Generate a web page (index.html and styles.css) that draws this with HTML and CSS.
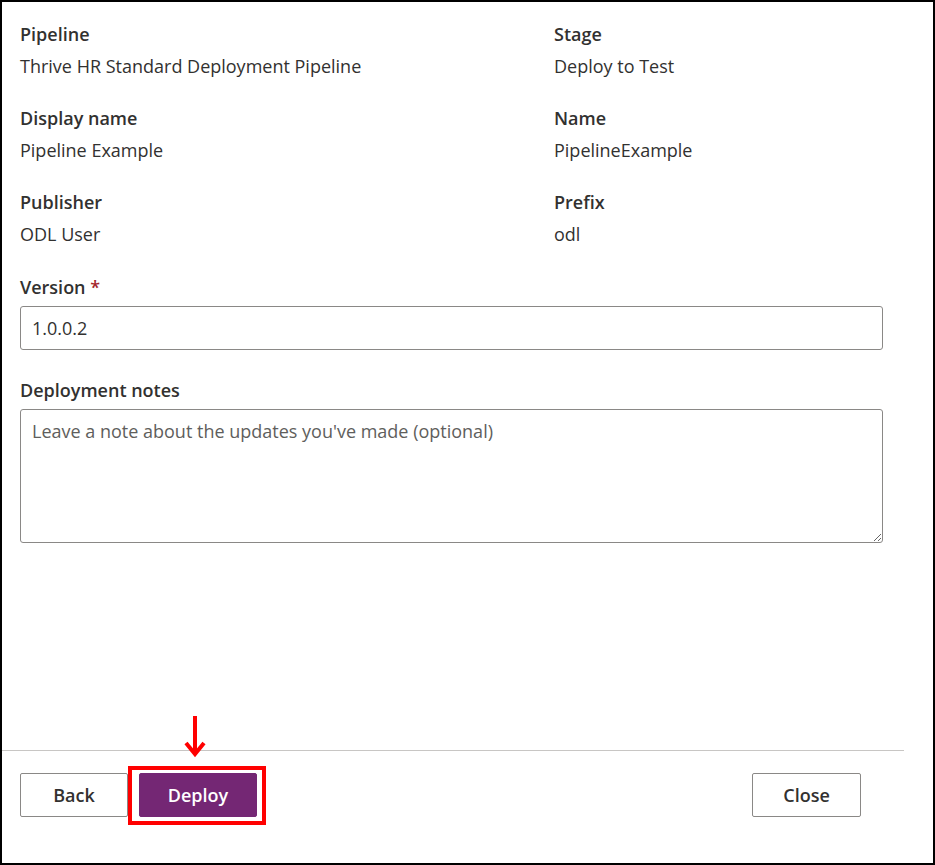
FILE: index.html
```html
<!DOCTYPE html>
<html lang="en">
<head>
<meta charset="utf-8">
<title>Deploy</title>
<link rel="stylesheet" href="styles.css">
</head>
<body>
<div class="frame">
  <main class="content">
    <div class="grid">
      <div class="field">
        <div class="label">Pipeline</div>
        <div class="value">Thrive HR Standard Deployment Pipeline</div>
      </div>
      <div class="field">
        <div class="label">Stage</div>
        <div class="value">Deploy to Test</div>
      </div>
      <div class="field">
        <div class="label">Display name</div>
        <div class="value">Pipeline Example</div>
      </div>
      <div class="field">
        <div class="label">Name</div>
        <div class="value">PipelineExample</div>
      </div>
      <div class="field">
        <div class="label">Publisher</div>
        <div class="value">ODL User</div>
      </div>
      <div class="field">
        <div class="label">Prefix</div>
        <div class="value">odl</div>
      </div>
    </div>
    <div class="form-field">
      <label class="label" for="ver">Version <span class="req">*</span></label>
      <input id="ver" class="input" type="text" value="1.0.0.2">
    </div>
    <div class="form-field">
      <label class="label" for="notes">Deployment notes</label>
      <textarea id="notes" class="textarea" placeholder="Leave a note about the updates you've made (optional)"></textarea>
    </div>
  </main>
  <footer class="footer">
    <div class="left-actions">
      <button class="btn">Back</button>
      <div class="highlight-wrap">
        <button class="btn primary">Deploy</button>
        <span class="highlight"></span>
        <svg class="arrow" width="24" height="42" viewBox="0 0 24 42">
          <line x1="12" y1="0" x2="12" y2="38" stroke="#ff0000" stroke-width="4"/>
          <polyline points="3,27 12,38 21,27" fill="none" stroke="#ff0000" stroke-width="4"/>
        </svg>
      </div>
    </div>
    <button class="btn close">Close</button>
  </footer>
</div>
</body>
</html>
```

FILE: styles.css
```css
* { box-sizing: border-box; }
html, body { margin: 0; padding: 0; background: #fff; }
body {
  font-family: "Open Sans", "Noto Sans", sans-serif;
  color: #323130;
}
.frame {
  width: 935px;
  height: 865px;
  border: 2px solid #000;
  display: flex;
  flex-direction: column;
}
.content {
  flex: 1;
  padding: 21px 50px 0 18px;
}
.grid {
  display: grid;
  grid-template-columns: 534px 1fr;
  row-gap: 30px;
}
.label {
  display: block;
  font-size: 18px;
  line-height: 22px;
  font-weight: 600;
  color: #323130;
}
.value {
  margin-top: 10px;
  font-size: 18px;
  line-height: 22px;
  color: #323130;
}
.req { color: #a4262c; }
.form-field {
  margin-top: 31px;
  display: flex;
  flex-direction: column;
  gap: 8px;
}
.form-field + .form-field { margin-top: 29px; }
.input, .textarea {
  width: 863px;
  font-family: inherit;
  font-size: 18px;
  color: #323130;
  border: 1px solid #8a8886;
  border-radius: 3px;
  padding: 0 11px;
  margin: 0;
}
.input { height: 44px; }
.textarea {
  height: 134px;
  padding-top: 10px;
  line-height: 22px;
  resize: vertical;
}
.textarea::placeholder { color: #605e5c; }
.footer {
  margin-right: 29px;
  border-top: 1px solid #c8c6c4;
  padding: 22px 43px 46px 18px;
  display: flex;
  justify-content: space-between;
  align-items: center;
}
.left-actions {
  display: flex;
  gap: 11px;
}
.btn {
  font-family: inherit;
  font-size: 18px;
  font-weight: 600;
  color: #323130;
  background: #fff;
  border: 1px solid #8a8886;
  border-radius: 2px;
  height: 44px;
  width: 108px;
  padding: 0;
}
.btn.close { width: 109px; }
.btn.primary {
  width: 118px;
  background: #742774;
  border-color: #742774;
  color: #fff;
}
.highlight-wrap { position: relative; }
.highlight {
  position: absolute;
  left: -11px;
  top: -7px;
  right: -9px;
  bottom: -8px;
  border: 4px solid #ff0000;
}
.arrow {
  position: absolute;
  left: 44px;
  top: -57px;
}
```
